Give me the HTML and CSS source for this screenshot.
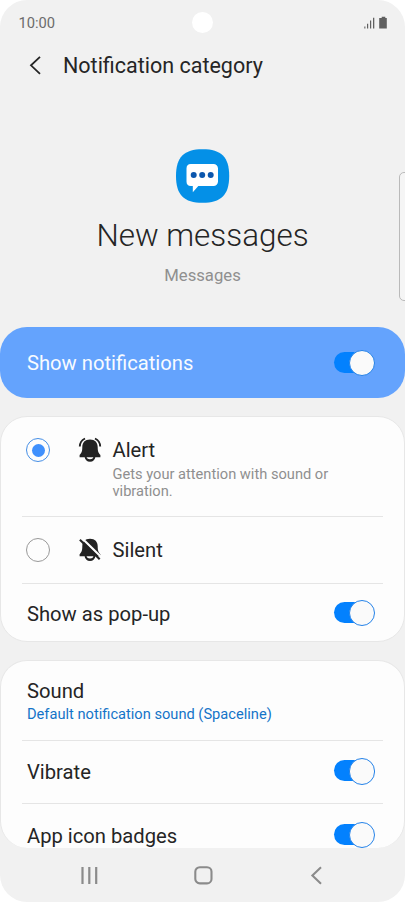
FILE: index.html
```html
<!DOCTYPE html>
<html lang="en">
<head>
<meta charset="utf-8">
<title>Notification category</title>
<link rel="stylesheet" href="styles.css">
</head>
<body>
<div class="phone">
  <span class="camera"></span>
  <span class="edge-handle"></span>
  <header class="status">
    <span>10:00</span>
    <svg width="24" height="14" viewBox="0 0 24 14" fill="#606060"><path d="M.3 10.500h1.100V12.500H.3zM3 7.700h1.200V12.500H3zM6 4.500h1.200V12.500H6zM9 1.700h1.300V12.500H9z"/><path d="M17.700.8h3.600v1.100h1.500v10.600h-7.600V1.900h2.500z"/></svg>
  </header>
  <div class="titlebar">
    <svg width="12" height="20" viewBox="0 0 12 20" fill="none" stroke="#252525" stroke-width="1.8"><path d="M11 .8 2 9.300l9 8.500"/></svg>
    <h1>Notification category</h1>
  </div>
  <section class="hero">
    <svg width="54" height="54" viewBox="0 0 54 54"><path d="M26.500.2C45.500.2 53.200 8 53.200 27S45 53.800 26.500 53.800 0 46 0 27 8 .2 26.500.2z" fill="#0490e7"/><path d="M14.800 14.900h22.700a4.500 4.500 0 0 1 4.500 4.500v13.200a4.500 4.500 0 0 1-4.500 4.500H22.300L16.800 43.300V37.100h-2A4.500 4.500 0 0 1 10.500 32.600V19.400a4.500 4.500 0 0 1 4.300-4.500z" fill="#fff"/><g fill="#0b56ad"><circle cx="17.700" cy="26" r="3"/><circle cx="26.200" cy="26" r="3"/><circle cx="34.700" cy="26" r="3"/></g></svg>
    <h2>New messages</h2>
    <p>Messages</p>
  </section>
  <main>
    <section class="banner"><span class="label">Show notifications</span><i class="switch"></i></section>
    <section class="card modes">
      <div class="mode alert">
        <i class="radio on"></i>
        <svg class="bell" width="24" height="26" viewBox="0 0 24 26" fill="#222"><path d="M12 2.600c5 0 7.700 3 7.700 7.500 0 4.700.8 5.900 2.700 8v2.100H1.600v-2.100c1.900-2.100 2.700-3.300 2.700-8 0-4.500 2.700-7.500 7.700-7.500z"/><path d="M6.600 19.500a5.400 5.200 0 0 0 10.800 0h-2a3.400 2.800 0 0 1-6.800 0z"/><path d="M1.800 9.500Q2 3.800 7 1.500M22.200 9.500Q22 3.800 17 1.500" fill="none" stroke="#222" stroke-width="1.900"/></svg>
        <div class="text"><span class="label">Alert</span><p>Gets your attention with sound or<br>vibration.</p></div>
      </div>
      <div class="mode silent">
        <i class="radio"></i>
        <svg class="bell" width="24" height="26" viewBox="0 0 24 26"><g fill="#222"><path d="M12 1.800c5 0 7.700 3 7.700 7.400 0 4.700.8 5.900 2.700 8v2.100H1.600v-2.100c1.900-2.100 2.700-3.300 2.700-8 0-4.400 2.700-7.400 7.700-7.400z"/><path d="M6.600 18.700a5.400 5.200 0 0 0 10.800 0h-2a3.400 2.800 0 0 1-6.800 0z"/></g><path d="m4 1.200 20 19.500" stroke="#fdfdfd" stroke-width="2.200"/><path d="m1.900 2.700 19.800 19.500" stroke="#222" stroke-width="2.100"/></svg>
        <span class="label">Silent</span>
      </div>
      <div class="row popup"><span class="label">Show as pop-up</span><i class="switch"></i></div>
    </section>
    <section class="card options">
      <div class="sound"><span class="label">Sound</span><p>Default notification sound (Spaceline)</p></div>
      <div class="row vibrate"><span class="label">Vibrate</span><i class="switch"></i></div>
      <div class="row badges"><span class="label">App icon badges</span><i class="switch"></i></div>
    </section>
  </main>
  <nav>
    <svg width="18" height="20" viewBox="0 0 18 20" fill="none" stroke="#8b8b8b" stroke-width="2.200"><path d="M2.500 2v17M9.300 2v17M16.200 2v17"/></svg>
    <svg width="20" height="20" viewBox="0 0 20 20" fill="none" stroke="#8b8b8b" stroke-width="2.100"><rect x="1.300" y="2.200" width="16.200" height="16.200" rx="4.500"/></svg>
    <svg width="12" height="20" viewBox="0 0 12 20" fill="none" stroke="#8b8b8b" stroke-width="2.100"><path d="M11 2.300 2.400 10.500l8.600 8.200"/></svg>
  </nav>
</div>
</body>
</html>
```
FILE: styles.css
```css
* { box-sizing: border-box; }
body { margin: 0; background: #fff; font-family: Roboto, "Liberation Sans", sans-serif; color: #252525; }
h1, h2, p { margin: 0; font-weight: 400; }
svg { display: block; flex: none; }
.phone { position: relative; width: 405px; height: 902px; overflow: hidden; background: #f1f1f1; border-radius: 27px; }
.camera { position: absolute; left: 191.500px; top: 11.500px; width: 21.500px; height: 21.500px; border-radius: 50%; background: #fff; }
.edge-handle { position: absolute; left: 399px; top: 172px; width: 12px; height: 129px; border: 1.500px solid #bababa; border-radius: 5px; background: #f5f5f5; }
.status { height: 46px; padding: 0 17px 0 18.500px; display: flex; align-items: center; justify-content: space-between; font-size: 14.700px; color: #6b6b6b; }
.titlebar { height: 40px; padding-left: 29px; display: flex; align-items: center; gap: 22px; }
h1 { font-size: 21.500px; line-height: 40px; }
.hero { height: 240.500px; padding-top: 63px; display: flex; flex-direction: column; align-items: center; }
h2 { margin-top: 13px; font-size: 31.400px; line-height: 40px; font-weight: 300; }
.hero p { margin-top: 9px; font-size: 16.700px; line-height: 22px; color: #8f8f8f; }
.label { font-size: 20.200px; line-height: 24px; white-space: nowrap; }
.banner { height: 71.500px; padding: 0 30px 0 27px; border-radius: 27px; background: #64a3fd; color: #f8fbff; display: flex; align-items: center; justify-content: space-between; }
.banner .label { padding-top: 2px; }
.switch { position: relative; width: 41px; height: 25px; flex: none; }
.switch::before { content: ""; position: absolute; left: 0; top: 2px; width: 34px; height: 21px; border-radius: 11px; background: #0381fe; }
.switch::after { content: ""; position: absolute; right: 0; top: 0; width: 24.500px; height: 24.500px; border: 1.200px solid #2482e8; border-radius: 50%; background: #fafafa; }
.card { border: 1px solid #e7e7e7; border-radius: 27px; background: #fdfdfd; overflow: hidden; }
.modes { height: 226px; margin-top: 18px; }
.options { height: 188px; margin-top: 18px; border-bottom: 0; }
.mode { display: flex; margin: 0 21px; padding-left: 4px; }
.alert { height: 99px; padding-top: 21px; }
.silent { height: 67px; border-top: 1.500px solid #e5e5e5; align-items: center; }
.silent .label { padding-bottom: 1px; }
.radio { width: 24px; height: 24px; border: 1px solid #999; border-radius: 50%; flex: none; display: grid; place-items: center; }
.radio.on { border-color: #458ee5; }
.radio.on::before { content: ""; width: 13px; height: 13px; border-radius: 50%; background: #3f90fd; }
.bell { margin: 0 10.500px 0 28px; }
.alert .bell { margin-top: -1px; }
.alert .label { display: block; }
.alert p { font-size: 14.650px; line-height: 17.300px; color: #8f8f8f; margin-top: 3.500px; white-space: nowrap; }
.row { height: 64px; margin: 0 21px; padding: 0 8px 3px 5px; border-top: 1.500px solid #e5e5e5; display: flex; align-items: center; justify-content: space-between; }
.row .label { padding-top: 3px; }
.popup { height: 60px; }
.sound { height: 79px; margin: 0 26px; padding-top: 18px; }
.vibrate { height: 63px; }
.sound .label { display: block; }
.sound p { font-size: 14.650px; line-height: 18px; margin-top: 2px; color: #1474c8; white-space: nowrap; }
nav { height: 54px; padding: 0 83px 0 80px; display: flex; align-items: center; justify-content: space-between; }
```
